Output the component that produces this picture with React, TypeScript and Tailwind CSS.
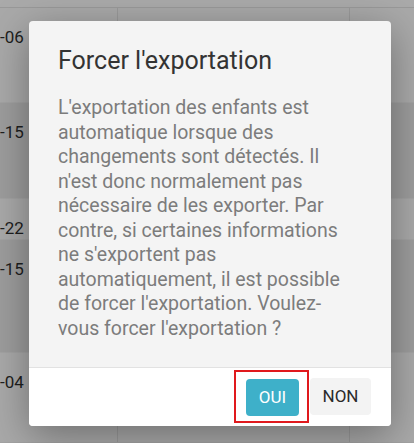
const rows = [
  { h: 95, label: '-06', tone: 'bg-[#a9a9a9]' },
  { h: 96, label: '-15', tone: 'bg-[#9d9d9d]' },
  { h: 41, label: '-22', tone: 'bg-[#a9a9a9]' },
  { h: 113, label: '-15', tone: 'bg-[#9d9d9d]' },
  { h: 90, label: '-04', tone: 'bg-[#a9a9a9]' },
];

export default function App() {
  return (
    <div className="relative w-[414px] h-[443px] overflow-hidden bg-[#a6a6a6] font-['Roboto',sans-serif]">
      {/* Table behind the overlay */}
      <div className="flex flex-col">
        <div className="h-[8px] border-b border-[#999] bg-[#aaaaaa]" />
        {rows.map((row, i) => (
          <div key={i} className={`flex ${row.tone} border-b border-[#a3a3a3]`} style={{ height: row.h }}>
            <div className="w-[118px] border-r border-[#9a9a9a] pt-[17px] text-[17px] leading-[24px] text-[#1e1e1e]">
              {row.label}
            </div>
            <div className="w-[232px] border-r border-[#9a9a9a]" />
            <div className="flex-1" />
          </div>
        ))}
      </div>

      {/* Dialog */}
      <div className="absolute left-[29px] top-[21px] w-[362px] rounded-[4px] overflow-hidden bg-[#f4f4f4] shadow-[0_10px_40px_rgba(0,0,0,0.35)]">
        <div className="px-[29px] pt-[24px] pb-[26px]">
          <h2 className="text-[25px] leading-[32px] text-[#333]">Forcer l'exportation</h2>
          <p className="mt-[19px] text-[19.5px] leading-[24.5px] text-[#7c7c7c]">
            L'exportation des enfants est automatique lorsque des changements sont détectés. Il n'est donc
            normalement pas nécessaire de les exporter. Par contre, si certaines informations ne s'exportent pas
            automatiquement, il est possible de forcer l'exportation. Voulez-vous forcer l'exportation ?
          </p>
        </div>
        <div className="flex justify-end items-center gap-[1px] border-t border-[#e2e2e2] bg-white pl-[20px] pr-[20px] pt-[2px] pb-[3px]">
          <div className="border-2 border-[#e0191d] pt-[7px] pb-[5px] pl-[10px] pr-[8px]">
            <button className="block h-[37px] w-[53px] rounded-[4px] bg-[#3eb0c9] text-[17px] text-white">OUI</button>
          </div>
          <button className="h-[37px] w-[61px] rounded-[4px] bg-[#f3f3f3] text-[17px] text-[#2a2a2a]">NON</button>
        </div>
      </div>
    </div>
  );
}
